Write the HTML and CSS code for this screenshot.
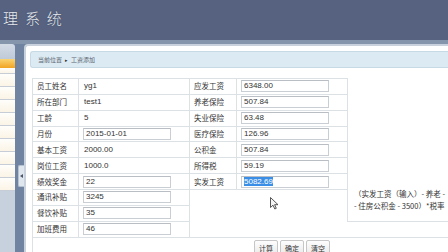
FILE: index.html
```html
<!DOCTYPE html>
<html lang="zh-CN">
<head>
<meta charset="utf-8">
<title>工资添加</title>
<link rel="stylesheet" href="styles.css">
</head>
<body>
<div class="app">
  <header class="top"><h1 class="title">理 系 统</h1></header>
  <div class="band"></div>
  <div class="main">
    <aside class="side">
      <div class="side-head"></div>
      <div class="side-active"></div>
      <ul class="side-list">
        <li class="short"></li><li></li><li></li><li></li><li></li><li></li><li></li><li></li><li></li><li></li>
      </ul>
      <div class="side-rest"></div>
    </aside>
    <div class="gutter"><div class="toggle"><span class="arrow"></span></div></div>
    <section class="panel">
      <div class="crumb"><span>当前位置</span><span class="sep">▸</span><span>工资添加</span></div>
      <table class="form">
        <colgroup><col class="c1"><col class="c2"><col class="c3"><col class="c4"><col class="c5"></colgroup>
        <tr>
          <td class="lab">员工姓名</td><td class="val">yg1</td>
          <td class="lab">应发工资</td><td class="fld"><span class="field">6348.00</span></td>
          <td class="note" rowspan="9"><div class="note-line">（实发工资（输入）- 养老 -</div><div class="note-line">- 住房公积金 - 3500）*税率</div></td>
        </tr>
        <tr>
          <td class="lab">所在部门</td><td class="val">test1</td>
          <td class="lab">养老保险</td><td class="fld"><span class="field">507.84</span></td>
        </tr>
        <tr>
          <td class="lab">工龄</td><td class="val">5</td>
          <td class="lab">失业保险</td><td class="fld"><span class="field">63.48</span></td>
        </tr>
        <tr>
          <td class="lab">月份</td><td class="fld"><span class="field">2015-01-01</span></td>
          <td class="lab">医疗保险</td><td class="fld"><span class="field">126.96</span></td>
        </tr>
        <tr>
          <td class="lab">基本工资</td><td class="val">2000.00</td>
          <td class="lab">公积金</td><td class="fld"><span class="field">507.84</span></td>
        </tr>
        <tr>
          <td class="lab">岗位工资</td><td class="val">1000.0</td>
          <td class="lab">所得税</td><td class="fld"><span class="field">59.19</span></td>
        </tr>
        <tr>
          <td class="lab">绩效奖金</td><td class="fld"><span class="field">22</span></td>
          <td class="lab">实发工资</td><td class="fld"><span class="field"><span class="sel">5082.69</span></span></td>
        </tr>
        <tr>
          <td class="lab">通讯补贴</td><td class="fld"><span class="field">3245</span></td>
          <td class="blank" colspan="2" rowspan="3"></td>
        </tr>
        <tr>
          <td class="lab">餐饮补贴</td><td class="fld"><span class="field">35</span></td>
        </tr>
        <tr>
          <td class="lab">加班费用</td><td class="fld"><span class="field">46</span></td>
          <td class="tail"></td>
        </tr>
        <tr>
          <td class="actions" colspan="5"><button class="btn">计算</button><button class="btn">确定</button><button class="btn">清空</button></td>
        </tr>
      </table>
    </section>
  </div>
  <svg class="cursor" width="9" height="13" viewBox="0 0 9 13"><path d="M0.5 0.5 L0.5 10.5 L3 8.2 L4.8 12 L6.3 11.3 L4.6 7.7 L8 7.7 Z" fill="#f4f4f4" stroke="#444" stroke-width="0.9" stroke-linejoin="round"/></svg>
</div>
</body>
</html>
```
FILE: styles.css
```css
* { box-sizing: border-box; }
html, body { margin: 0; padding: 0; }
body { width: 448px; height: 252px; overflow: hidden; background: #fff; font-family: "Liberation Sans", "Noto Sans CJK SC", sans-serif; }
.app { position: relative; width: 448px; height: 252px; overflow: hidden; display: flex; flex-direction: column; }
.top { height: 40px; background: #56627f; display: flex; align-items: center; padding-left: 3px; flex: none; }
.title { margin: 0; font-family: "Noto Sans CJK SC", sans-serif; font-weight: 300; font-size: 15px; letter-spacing: 1.8px; color: #e9edf3; text-shadow: 0 0 1px #2e3a52; line-height: 16px; margin-top: -4px; }
.band { height: 4px; background: #8596ac; flex: none; }
.main { flex: 1; display: flex; min-height: 0; background: #7083a0; }
.side { width: 15px; flex: none; display: flex; flex-direction: column; }
.side-head { height: 15px; background: linear-gradient(#d3dbe6, #bfcad8); border-radius: 0 3px 0 0; }
.side-active { height: 9px; background: linear-gradient(#fad472, #f1a422); }
.side-list { list-style: none; margin: 0; padding: 0; }
.side-list li { height: 13px; background: linear-gradient(#fffefb, #fbf4e6); border-bottom: 1px solid #c6cdd6; }
.side-list li.short { height: 6px; }
.side-rest { flex: 1; background: #c6d1dd; }
.gutter { width: 9px; flex: none; padding-left: 3px; padding-top: 121px; }
.toggle { width: 6px; height: 22px; background: #dfe6ee; border: 1px solid #b6c2d0; border-right: none; border-radius: 2px 0 0 2px; display: flex; align-items: center; justify-content: center; }
.arrow { width: 0; height: 0; border-top: 2px solid transparent; border-bottom: 2px solid transparent; border-right: 3px solid #4a5468; }
.panel { flex: 1; background: #fff; border-top: 2px solid #c9d2dc; border-left: 2px solid #c9d2dc; border-radius: 4px 0 0 0; padding: 5px 0 0 4px; min-width: 0; }
.crumb { height: 17px; background: #dcebf3; border: 1px solid #c6dae6; border-right: none; border-radius: 3px 0 0 3px; padding-left: 7px; display: flex; align-items: center; gap: 2px; font-family: "Noto Sans CJK SC", sans-serif; font-size: 6px; color: #5a6470; line-height: 15px; }
.crumb .sep { font-size: 5px; color: #333; padding: 0 1px; }
.form { margin: 10px 0 0 2px; border-collapse: collapse; table-layout: fixed; width: 520px; }
.c1 { width: 46px; } .c2 { width: 111px; } .c3 { width: 47px; } .c4 { width: 111px; } .c5 { width: 205px; }
.form td { border: 1px solid #dce1e6; height: 15.86px; padding: 0; line-height: 12px; color: #333; white-space: nowrap; overflow: hidden; }
.lab { font-family: "Noto Sans CJK SC", sans-serif; font-size: 7.5px; padding-left: 4px !important; }
.val { font-size: 8px; padding-left: 5px !important; }
.fld { padding-left: 4px !important; }
.field { display: block; width: 88px; height: 12px; border: 1px solid #c9ced4; border-top-color: #b9bec5; background: #fff; font-size: 8px; line-height: 10px; padding-left: 2px; color: #333; }
.sel { background: #3b8ee6; color: #fff; }
.form td.note { border-top: none; border-right: none; vertical-align: bottom; padding: 0 0 9px 6px !important; font-family: "Noto Sans CJK SC", sans-serif; font-size: 7.5px; }
.note-line { line-height: 12px; }
.form td.blank { border-right: none; }
.form td.tail { border-left: none; border-right: none; border-top: none; }
.form td.actions { border-right: none; border-bottom: none; height: 20px; padding: 2px 0 0 221px !important; vertical-align: top; }
.btn { height: 16px; width: 24px; margin-right: 2px; padding: 0; border: 1px solid #c6c6c6; border-radius: 2px; background: linear-gradient(#fdfdfd, #e9e9e9); font-family: "Noto Sans CJK SC", sans-serif; font-size: 7px; color: #333; line-height: 12px; }
.cursor { position: absolute; left: 270px; top: 197px; }
```
